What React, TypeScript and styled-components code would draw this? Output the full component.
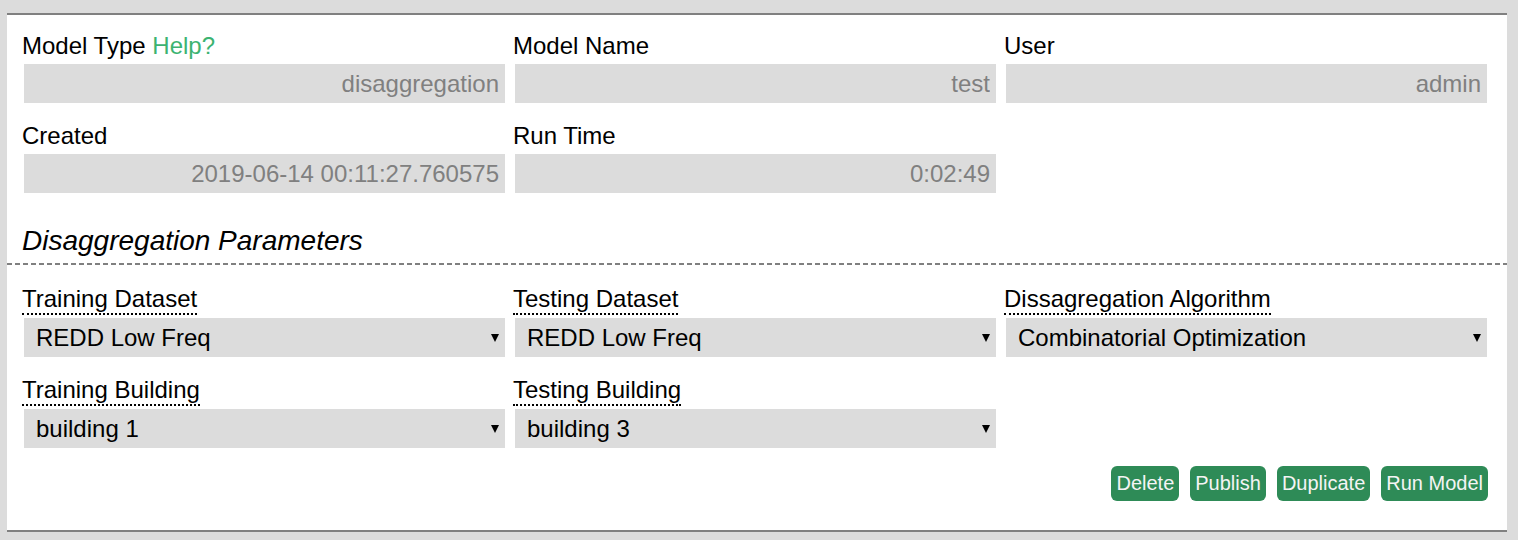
import React from "react";
import styled, { createGlobalStyle } from "styled-components";

const GlobalStyle = createGlobalStyle`
  html, body {
    margin: 0;
    padding: 0;
    background: #dcdcdc;
    font-family: "Liberation Sans", Arial, sans-serif;
  }
  * {
    box-sizing: border-box;
  }
`;

const Card = styled.div`
  margin: 13px 11px 8px 7px;
  background: #ffffff;
  border-top: 2px solid #808080;
  border-bottom: 2px solid #808080;
`;

const Section = styled.div<{ $top: number; $bottom?: number }>`
  padding: ${(p) => p.$top}px 18px ${(p) => p.$bottom ?? 0}px 15px;
`;

const FieldGrid = styled.div<{ $gap: number }>`
  display: grid;
  grid-template-columns: repeat(3, 485px);
  column-gap: 6px;
  row-gap: ${(p) => p.$gap}px;
`;

const Field = styled.div`
  display: flex;
  flex-direction: column;
  align-items: flex-start;
`;

const Label = styled.span<{ $hint?: boolean }>`
  display: inline-block;
  font-size: 24px;
  line-height: 28px;
  color: #000;
  border-bottom: ${(p) => (p.$hint ? "2px dotted #000" : "none")};
`;

const HelpLink = styled.a`
  color: #3cb371;
  text-decoration: none;
  cursor: pointer;
`;

const ReadOnly = styled.input`
  align-self: stretch;
  margin: 4px 2px 0;
  height: 39px;
  border: none;
  outline: none;
  background: #dcdcdc;
  color: #808080;
  font-family: inherit;
  font-size: 24px;
  text-align: right;
  padding: 0 6px;
`;

const SelectWrap = styled.div`
  position: relative;
  align-self: stretch;
  margin: 3px 2px 0;
`;

const Select = styled.select`
  display: block;
  width: 100%;
  height: 39px;
  appearance: none;
  -webkit-appearance: none;
  border: none;
  outline: none;
  border-radius: 0;
  background: #dcdcdc;
  color: #000;
  font-family: inherit;
  font-size: 24px;
  padding: 0 24px 0 12px;
`;

const Arrow = styled.svg`
  position: absolute;
  right: 6px;
  top: 16px;
  width: 8px;
  height: 8px;
  pointer-events: none;
`;

const Heading = styled.h2`
  margin: 32px 0 0;
  padding-left: 15px;
  font-size: 28px;
  line-height: 32px;
  font-style: italic;
  font-weight: normal;
  color: #000;
`;

const Divider = styled.div`
  margin-top: 6px;
  height: 2px;
  background: repeating-linear-gradient(
    to right,
    #808080 0 5px,
    transparent 5px 8px
  );
`;

const Actions = styled.div`
  display: flex;
  justify-content: flex-end;
  gap: 11px;
  margin: 18px 1px 0 0;
`;

const Button = styled.button`
  height: 35px;
  padding: 0 5px;
  border: none;
  border-radius: 6px;
  background: #2e8b57;
  color: #f4f4f4;
  font-family: inherit;
  font-size: 20px;
  cursor: pointer;
`;

type SelectField = { label: string; value: string } | null;

const params: SelectField[] = [
  { label: "Training Dataset", value: "REDD Low Freq" },
  { label: "Testing Dataset", value: "REDD Low Freq" },
  { label: "Dissagregation Algorithm", value: "Combinatorial Optimization" },
  { label: "Training Building", value: "building 1" },
  { label: "Testing Building", value: "building 3" },
  null,
];

function Dropdown({ value }: { value: string }) {
  return (
    <SelectWrap>
      <Select defaultValue={value}>
        <option>{value}</option>
      </Select>
      <Arrow viewBox="0 0 8 8">
        <polygon points="0,0 8,0 4,8" fill="#000" />
      </Arrow>
    </SelectWrap>
  );
}

export default function App() {
  return (
    <>
      <GlobalStyle />
      <Card>
        <Section $top={17}>
          <FieldGrid $gap={19}>
            <Field>
              <Label>
                Model Type <HelpLink>Help?</HelpLink>
              </Label>
              <ReadOnly readOnly value="disaggregation" />
            </Field>
            <Field>
              <Label>Model Name</Label>
              <ReadOnly readOnly value="test" />
            </Field>
            <Field>
              <Label>User</Label>
              <ReadOnly readOnly value="admin" />
            </Field>
            <Field>
              <Label>Created</Label>
              <ReadOnly readOnly value="2019-06-14 00:11:27.760575" />
            </Field>
            <Field>
              <Label>Run Time</Label>
              <ReadOnly readOnly value="0:02:49" />
            </Field>
          </FieldGrid>
        </Section>
        <Heading>Disaggregation Parameters</Heading>
        <Divider />
        <Section $top={20} $bottom={29}>
          <FieldGrid $gap={19}>
            {params.map((f, i) =>
              f ? (
                <Field key={i}>
                  <Label $hint title={f.label}>
                    {f.label}
                  </Label>
                  <Dropdown value={f.value} />
                </Field>
              ) : (
                <div key={i} />
              )
            )}
          </FieldGrid>
          <Actions>
            <Button>Delete</Button>
            <Button>Publish</Button>
            <Button>Duplicate</Button>
            <Button>Run Model</Button>
          </Actions>
        </Section>
      </Card>
    </>
  );
}
